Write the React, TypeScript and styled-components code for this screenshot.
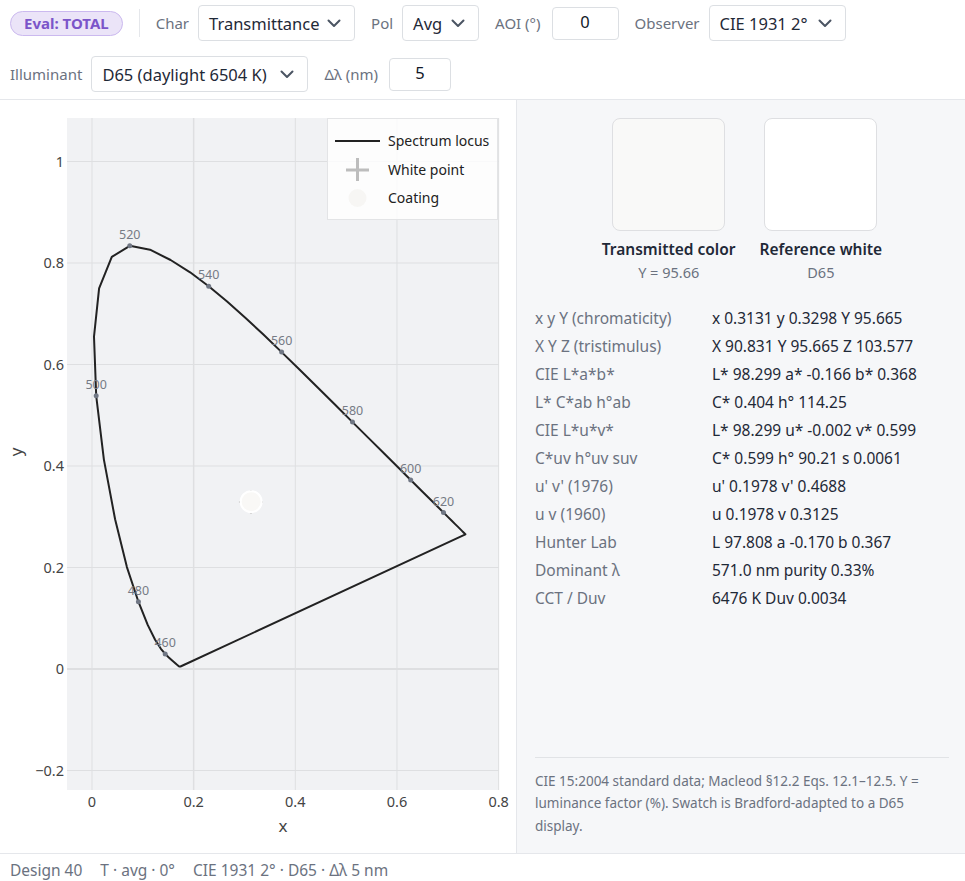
import React from 'react'
import styled, {createGlobalStyle} from 'styled-components'

const FONT = `"Noto Sans", "Open Sans", "Liberation Sans", sans-serif`

const GlobalStyle = createGlobalStyle`
  html, body {
    margin: 0;
    padding: 0;
    overflow: hidden;
    background: #ffffff;
  }
  body {
    font-family: ${FONT};
    color: #1f2937;
  }
`

// CIE 1931 2° spectrum locus, 5 nm steps
const LOCUS: [number, number, number][] = [
  [380, 0.1741, 0.005], [385, 0.174, 0.005], [390, 0.1738, 0.0049], [395, 0.1736, 0.0049],
  [400, 0.1733, 0.0048], [405, 0.173, 0.0048], [410, 0.1726, 0.0048], [415, 0.1721, 0.0048],
  [420, 0.1714, 0.0051], [425, 0.1703, 0.0058], [430, 0.1689, 0.0069], [435, 0.1669, 0.0086],
  [440, 0.1644, 0.0109], [445, 0.1611, 0.0138], [450, 0.1566, 0.0177], [455, 0.151, 0.0227],
  [460, 0.144, 0.0297], [465, 0.1355, 0.0399], [470, 0.1241, 0.0578], [475, 0.1096, 0.0868],
  [480, 0.0913, 0.1327], [485, 0.0687, 0.2007], [490, 0.0454, 0.295], [495, 0.0235, 0.4127],
  [500, 0.0082, 0.5384], [505, 0.0039, 0.6548], [510, 0.0139, 0.7502], [515, 0.0389, 0.812],
  [520, 0.0743, 0.8338], [525, 0.1142, 0.8262], [530, 0.1547, 0.8059], [535, 0.1929, 0.7816],
  [540, 0.2296, 0.7543], [545, 0.2658, 0.7243], [550, 0.3016, 0.6923], [555, 0.3373, 0.6589],
  [560, 0.3731, 0.6245], [565, 0.4087, 0.5896], [570, 0.4441, 0.5547], [575, 0.4788, 0.5202],
  [580, 0.5125, 0.4866], [585, 0.5448, 0.4544], [590, 0.5752, 0.4242], [595, 0.6029, 0.3965],
  [600, 0.627, 0.3725], [605, 0.6482, 0.3514], [610, 0.6658, 0.334], [615, 0.6801, 0.3197],
  [620, 0.6915, 0.3083], [625, 0.7006, 0.2993], [630, 0.7079, 0.292], [635, 0.714, 0.2859],
  [640, 0.719, 0.2809], [645, 0.723, 0.277], [650, 0.726, 0.274], [655, 0.7283, 0.2717],
  [660, 0.73, 0.27], [665, 0.7311, 0.2689], [670, 0.732, 0.268], [675, 0.7327, 0.2673],
  [680, 0.7334, 0.2666], [685, 0.734, 0.266], [690, 0.7344, 0.2656], [695, 0.7346, 0.2654],
  [700, 0.7347, 0.2653],
]

const MARKED = [460, 480, 500, 520, 540, 560, 580, 600, 620]

const METRICS: [string, string][] = [
  ['x y Y (chromaticity)', 'x 0.3131 y 0.3298 Y 95.665'],
  ['X Y Z (tristimulus)', 'X 90.831 Y 95.665 Z 103.577'],
  ['CIE L*a*b*', 'L* 98.299 a* -0.166 b* 0.368'],
  ['L* C*ab h°ab', 'C* 0.404 h° 114.25'],
  ['CIE L*u*v*', 'L* 98.299 u* -0.002 v* 0.599'],
  ['C*uv h°uv suv', 'C* 0.599 h° 90.21 s 0.0061'],
  ["u' v' (1976)", "u' 0.1978 v' 0.4688"],
  ['u v (1960)', 'u 0.1978 v 0.3125'],
  ['Hunter Lab', 'L 97.808 a -0.170 b 0.367'],
  ['Dominant λ', '571.0 nm purity 0.33%'],
  ['CCT / Duv', '6476 K Duv 0.0034'],
]

// plot geometry (svg coords)
const PW = 517
const PH = 753
const AREA = {left: 67, right: 499, top: 18, bottom: 690}
const px = (x: number) => 92 + x * 508.3
const py = (y: number) => 569 - y * 507.5

const Chevron = () => (
  <svg width="14" height="9" viewBox="0 0 14 9" fill="none">
    <polyline points="1.5,1.5 7,7 12.5,1.5" stroke="#4b5563" strokeWidth="2" strokeLinecap="round" strokeLinejoin="round" />
  </svg>
)

const Dropdown = ({value, width}: {value: string; width: number}) => (
  <StyledSelect $width={width}>
    <span>{value}</span>
    <Chevron />
  </StyledSelect>
)

const Field = ({label, children}: {label: string; children: React.ReactNode}) => (
  <StyledField>
    <StyledLabel>{label}</StyledLabel>
    {children}
  </StyledField>
)

const Chart = () => {
  const path = LOCUS.map(([, x, y], i) => `${i ? 'L' : 'M'}${px(x).toFixed(1)},${py(y).toFixed(1)}`).join(' ') + ' Z'
  const xTicks = [0, 0.2, 0.4, 0.6, 0.8]
  const yTicks = [-0.2, 0, 0.2, 0.4, 0.6, 0.8, 1]
  const cx = px(0.3131)
  const cy = py(0.3298)
  const wx = px(0.3127)
  const wy = py(0.329)

  return (
    <StyledSvg width={PW} height={PH} viewBox={`0 0 ${PW} ${PH}`}>
      <rect x={AREA.left} y={AREA.top} width={AREA.right - AREA.left} height={AREA.bottom - AREA.top} fill="#f1f2f4" />
      {xTicks.map((t) => (
        <line key={'gx' + t} x1={px(t)} x2={px(t)} y1={AREA.top} y2={AREA.bottom} stroke="#dedfe1" strokeWidth={t === 0.2 ? 1.5 : 1} />
      ))}
      {yTicks.map((t) => (
        <line key={'gy' + t} x1={AREA.left} x2={AREA.right} y1={py(t)} y2={py(t)} stroke="#dedfe1" strokeWidth={t === 0 ? 2 : 1} />
      ))}
      {xTicks.map((t) => (
        <text key={'tx' + t} x={px(t)} y={707} textAnchor="middle" fontSize="14.5" fill="#444">
          {t === 0 ? '0' : t.toString()}
        </text>
      ))}
      {yTicks.map((t) => (
        <text key={'ty' + t} x={64} y={py(t) + 5} textAnchor="end" fontSize="14.5" fill="#444">
          {t < 0 ? '−' + Math.abs(t) : t.toString()}
        </text>
      ))}
      <text x={283} y={732} textAnchor="middle" fontSize="17" fill="#444">x</text>
      <text x={22} y={352} textAnchor="middle" fontSize="17" fill="#444" transform="rotate(-90 22 352)">y</text>

      <path d={path} fill="none" stroke="#222" strokeWidth="2" strokeLinejoin="round" />
      {LOCUS.filter(([nm]) => MARKED.includes(nm)).map(([nm, x, y]) => (
        <g key={nm}>
          <circle cx={px(x)} cy={py(y)} r="2.5" fill="#707784" />
          <text x={px(x)} y={py(y) - 7} textAnchor="middle" fontSize="12.5" fill="#767b85">{nm}</text>
        </g>
      ))}

      <g stroke="#cdcdcd" strokeWidth="2">
        <line x1={wx - 12} x2={wx + 12} y1={wy} y2={wy} />
        <line x1={wx} x2={wx} y1={wy - 12} y2={wy + 12} />
      </g>
      <circle cx={cx} cy={cy} r="10.5" fill="#f9f8f6" stroke="#ffffff" strokeWidth="2" />

      <rect x={327.5} y={18.5} width={170} height={101} fill="#ffffff" fillOpacity="0.82" stroke="#e3e4e6" />
      <line x1={335} x2={380} y1={41} y2={41} stroke="#222" strokeWidth="2" />
      <text x={388} y={46} fontSize="14" fill="#222">Spectrum locus</text>
      <g stroke="#bdbdbd" strokeWidth="3">
        <line x1={346} x2={369} y1={70} y2={70} />
        <line x1={357.5} x2={357.5} y1={58} y2={81} />
      </g>
      <text x={388} y={75} fontSize="14" fill="#222">White point</text>
      <circle cx={357.5} cy={98} r="9" fill="#f7f6f4" />
      <text x={388} y={103} fontSize="14" fill="#222">Coating</text>
    </StyledSvg>
  )
}

const App = () => {
  return (
    <StyledApp>
      <GlobalStyle />
      <StyledHeader>
        <StyledBadge>Eval: TOTAL</StyledBadge>
        <StyledDivider />
        <Field label="Char"><Dropdown value="Transmittance" width={157} /></Field>
        <Field label="Pol"><Dropdown value="Avg" width={77} /></Field>
        <Field label="AOI (°)"><StyledInput $width={67}>0</StyledInput></Field>
        <Field label="Observer"><Dropdown value="CIE 1931 2°" width={137} /></Field>
        <Field label="Illuminant"><Dropdown value="D65 (daylight 6504 K)" width={217} /></Field>
        <Field label="Δλ (nm)"><StyledInput $width={62}>5</StyledInput></Field>
      </StyledHeader>

      <StyledMain>
        <StyledPlotPane>
          <Chart />
        </StyledPlotPane>

        <StyledSide>
          <StyledSwatches>
            <StyledSwatchCol>
              <StyledSwatch $color="#f9f9f8" />
              <StyledSwatchTitle>Transmitted color</StyledSwatchTitle>
              <StyledSwatchSub>Y = 95.66</StyledSwatchSub>
            </StyledSwatchCol>
            <StyledSwatchCol>
              <StyledSwatch $color="#ffffff" />
              <StyledSwatchTitle>Reference white</StyledSwatchTitle>
              <StyledSwatchSub>D65</StyledSwatchSub>
            </StyledSwatchCol>
          </StyledSwatches>

          <StyledTable>
            {METRICS.map(([k, v]) => (
              <React.Fragment key={k}>
                <StyledKey>{k}</StyledKey>
                <StyledValue>{v}</StyledValue>
              </React.Fragment>
            ))}
          </StyledTable>

          <StyledNote>
            CIE 15:2004 standard data; Macleod §12.2 Eqs. 12.1–12.5. Y = luminance factor (%). Swatch is Bradford-adapted to a D65 display.
          </StyledNote>
        </StyledSide>
      </StyledMain>

      <StyledFooter>
        <span>Design 40</span>
        <span>T · avg · 0°</span>
        <span>CIE 1931 2° · D65 · Δλ 5 nm</span>
      </StyledFooter>
    </StyledApp>
  )
}

const StyledApp = styled.div`
  height: 100vh;
  display: grid;
  grid-template-rows: auto 1fr 28px;
  overflow: hidden;
`

const StyledHeader = styled.header`
  display: flex;
  flex-wrap: wrap;
  align-items: center;
  column-gap: 16px;
  row-gap: 15px;
  padding: 5px 10px 7px;
  border-bottom: 1px solid #e5e7eb;
`

const StyledBadge = styled.div`
  height: 25px;
  box-sizing: border-box;
  padding: 0 13px;
  display: flex;
  align-items: center;
  border-radius: 13px;
  background: #ebe4f8;
  border: 1px solid #cbb9ef;
  color: #7b55c9;
  font-size: 15px;
  font-weight: 700;
`

const StyledDivider = styled.div`
  width: 1px;
  height: 28px;
  background: #e5e7eb;
`

const StyledField = styled.div`
  display: flex;
  align-items: center;
  gap: 9px;
`

const StyledLabel = styled.span`
  color: #6b7280;
  font-size: 15px;
`

const StyledSelect = styled.div<{$width: number}>`
  width: ${(p) => p.$width}px;
  height: 36px;
  box-sizing: border-box;
  display: flex;
  align-items: center;
  justify-content: space-between;
  padding: 0 13px 0 10px;
  border: 1px solid #dcdfe3;
  border-radius: 4px;
  background: #fff;
  font-size: 16.5px;
  color: #1f2937;
  white-space: nowrap;
`

const StyledInput = styled.div<{$width: number}>`
  width: ${(p) => p.$width}px;
  height: 33px;
  margin-left: 2px;
  box-sizing: border-box;
  display: flex;
  align-items: center;
  justify-content: center;
  padding-bottom: 3px;
  border: 1px solid #dcdfe3;
  border-radius: 4px;
  background: #fff;
  font-size: 16.5px;
  color: #111827;
`

const StyledMain = styled.main`
  display: grid;
  grid-template-columns: 517px 1fr;
  min-height: 0;
`

const StyledPlotPane = styled.section`
  border-right: 1px solid #e5e7eb;
  overflow: hidden;
`

const StyledSvg = styled.svg`
  display: block;
  font-family: ${FONT};
`

const StyledSide = styled.aside`
  background: #f6f7f9;
  display: flex;
  flex-direction: column;
  padding: 18px 16px 16px 18px;
  min-height: 0;
`

const StyledSwatches = styled.div`
  display: flex;
  justify-content: center;
  gap: 24px;
`

const StyledSwatchCol = styled.div`
  display: flex;
  flex-direction: column;
  align-items: center;
`

const StyledSwatch = styled.div<{$color: string}>`
  width: 113px;
  height: 113px;
  box-sizing: border-box;
  border-radius: 8px;
  border: 1px solid #dedfe2;
  background: ${(p) => p.$color};
`

const StyledSwatchTitle = styled.div`
  margin-top: 7px;
  font-size: 15.5px;
  font-weight: 600;
  line-height: 22px;
  color: #1f2937;
`

const StyledSwatchSub = styled.div`
  margin-top: 2px;
  font-size: 14.5px;
  line-height: 20px;
  color: #6b7280;
`

const StyledTable = styled.div`
  margin-top: 22px;
  display: grid;
  grid-template-columns: 177px 1fr;
  grid-auto-rows: 28px;
  align-items: center;
  font-size: 15.5px;
`

const StyledKey = styled.div`
  color: #6b7280;
`

const StyledValue = styled.div`
  color: #1f2937;
`

const StyledNote = styled.p`
  margin: auto 0 0;
  padding-top: 12px;
  border-top: 1px solid #e1e3e6;
  font-size: 13.5px;
  line-height: 22.5px;
  color: #6b7280;
`

const StyledFooter = styled.footer`
  border-top: 1px solid #e5e7eb;
  display: flex;
  align-items: center;
  gap: 18px;
  padding: 5px 10px 0;
  font-size: 15.5px;
  color: #6b7280;
`

export default App
